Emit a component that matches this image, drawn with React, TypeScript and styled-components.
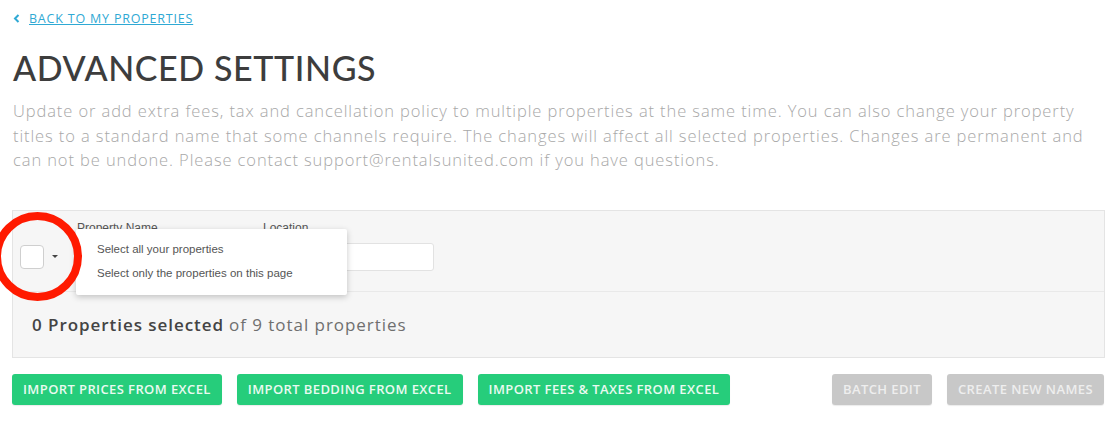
import React from "react";
import styled, { createGlobalStyle } from "styled-components";

const GlobalStyle = createGlobalStyle`
  body {
    margin: 0;
    background: #ffffff;
    font-family: Lato, "Open Sans", Arial, sans-serif;
  }
`;

const Page = styled.div`
  width: 1118px;
  height: 428px;
  padding: 0 13px;
  box-sizing: border-box;
  overflow: hidden;
`;

const BackLink = styled.a`
  display: inline-flex;
  align-items: center;
  gap: 9px;
  margin-top: 10px;
  font-family: "Open Sans", Arial, sans-serif;
  font-size: 12.5px;
  color: #2fa9d4;
  text-decoration: underline;
  text-transform: uppercase;
  letter-spacing: 0.8px;
  cursor: pointer;
`;

const Title = styled.h1`
  margin: 21px 0 0 0;
  font-size: 34px;
  font-weight: 500;
  line-height: 40px;
  color: #3d3d3d;
  letter-spacing: 0.6px;
`;

const Description = styled.p`
  margin: 11px 0 0 0;
  font-family: "Open Sans", Arial, sans-serif;
  font-size: 16.5px;
  font-weight: 300;
  line-height: 24.5px;
  color: #a8a8a8;
  letter-spacing: 0.9px;
  white-space: nowrap;
`;

const Panel = styled.div`
  margin-top: 37px;
  width: 1093px;
  margin-left: -1px;
  background: #f6f6f6;
  border: 1px solid #e4e4e4;
  box-sizing: border-box;
  position: relative;
`;

const HeaderRow = styled.div`
  height: 81px;
  display: flex;
  align-items: flex-start;
  padding: 10px 0 0 7px;
  box-sizing: border-box;
  border-bottom: 1px solid #e9e9e9;
`;

const CheckCell = styled.div`
  display: flex;
  align-items: center;
  gap: 8px;
  width: 57px;
  margin-top: 24px;
`;

const CheckBox = styled.div`
  width: 24px;
  height: 24px;
  background: #ffffff;
  border: 1px solid #cfcfcf;
  border-radius: 4px;
  box-sizing: border-box;
`;

const Caret = styled.span`
  width: 0;
  height: 0;
  border-left: 3px solid transparent;
  border-right: 3px solid transparent;
  border-top: 3px solid #444;
`;

const Field = styled.div<{ $width: number }>`
  width: ${(p) => p.$width}px;
  margin-right: 14px;
  display: flex;
  flex-direction: column;
  gap: 8px;
`;

const FieldLabel = styled.label`
  font-family: "Liberation Sans", Arial, sans-serif;
  font-size: 12px;
  color: #555;
  line-height: 14px;
`;

const FieldInput = styled.div`
  height: 28px;
  background: #ffffff;
  border: 1px solid #e2e2e2;
  border-radius: 3px;
  box-sizing: border-box;
`;

const SummaryRow = styled.div`
  height: 65px;
  display: flex;
  align-items: center;
  padding-left: 19px;
  font-family: "Open Sans", Arial, sans-serif;
  font-size: 17px;
  color: #6f6f6f;
  letter-spacing: 0.95px;
`;

const Strong = styled.span`
  font-weight: 600;
  color: #444;
  margin-right: 5px;
`;

const Dropdown = styled.div`
  position: absolute;
  left: 63px;
  top: 18px;
  width: 271px;
  height: 66px;
  background: #ffffff;
  box-shadow: 0 2px 6px rgba(0, 0, 0, 0.22);
  border-radius: 2px;
  padding: 13px 0 0 21px;
  box-sizing: border-box;
  display: flex;
  flex-direction: column;
  gap: 10px;
`;

const DropItem = styled.div`
  font-family: "Liberation Sans", Arial, sans-serif;
  font-size: 11.5px;
  line-height: 14px;
  color: #555;
`;

const Highlight = styled.div`
  position: absolute;
  left: -20px;
  top: 1px;
  width: 89px;
  height: 89px;
  border: 8px solid #ff1a00;
  border-radius: 50%;
  box-sizing: border-box;
`;

const ButtonBar = styled.div`
  margin-top: 16px;
  width: 1092px;
  margin-left: -1px;
  display: flex;
  justify-content: space-between;
`;

const ButtonGroup = styled.div`
  display: flex;
  gap: 15px;
`;

const Button = styled.button<{ $disabled?: boolean }>`
  height: 31px;
  padding: 0 11px;
  border: none;
  border-radius: 3px;
  background: ${(p) => (p.$disabled ? "#c8c8c8" : "#26cd7b")};
  color: ${(p) => (p.$disabled ? "#eeeeee" : "#eafaf1")};
  font-family: "Open Sans", Arial, sans-serif;
  font-size: 13px;
  font-weight: 600;
  letter-spacing: 0.4px;
  text-transform: uppercase;
  box-shadow: 0 1px 1px rgba(0, 0, 0, 0.08);
`;

const App: React.FC = () => {
  return (
    <Page>
      <GlobalStyle />
      <BackLink>
        <svg width="7" height="9" viewBox="0 0 7 9">
          <path d="M5.5 1 L2 4.5 L5.5 8" fill="none" stroke="#2fa9d4" strokeWidth="2" />
        </svg>
        Back to my properties
      </BackLink>
      <Title>ADVANCED SETTINGS</Title>
      <Description>
        Update or add extra fees, tax and cancellation policy to multiple properties at the same time. You can also change your property
        <br />
        titles to a standard name that some channels require. The changes will affect all selected properties. Changes are permanent and
        <br />
        can not be undone. Please contact support@rentalsunited.com if you have questions.
      </Description>

      <Panel>
        <HeaderRow>
          <CheckCell>
            <CheckBox />
            <Caret />
          </CheckCell>
          <Field $width={172}>
            <FieldLabel>Property Name</FieldLabel>
            <FieldInput />
          </Field>
          <Field $width={171}>
            <FieldLabel>Location</FieldLabel>
            <FieldInput />
          </Field>
        </HeaderRow>
        <SummaryRow>
          <Strong>0 Properties selected</Strong> of 9 total properties
        </SummaryRow>
        <Dropdown>
          <DropItem>Select all your properties</DropItem>
          <DropItem>Select only the properties on this page</DropItem>
        </Dropdown>
        <Highlight />
      </Panel>

      <ButtonBar>
        <ButtonGroup>
          <Button>Import prices from Excel</Button>
          <Button>Import bedding from Excel</Button>
          <Button>Import fees &amp; taxes from Excel</Button>
        </ButtonGroup>
        <ButtonGroup>
          <Button $disabled>Batch edit</Button>
          <Button $disabled>Create new names</Button>
        </ButtonGroup>
      </ButtonBar>
    </Page>
  );
};

export default App;
